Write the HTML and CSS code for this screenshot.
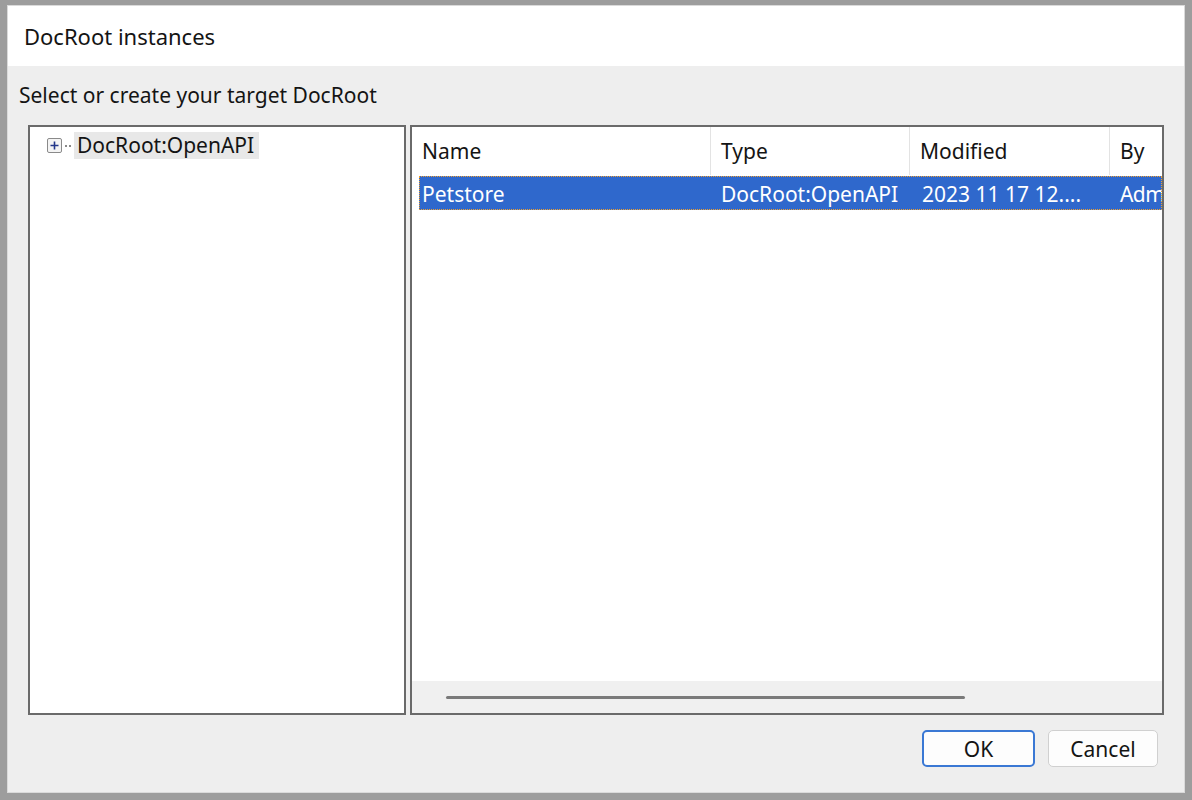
FILE: index.html
```html
<!DOCTYPE html>
<html lang="en">
<head>
    <meta charset="UTF-8">
    <title>DocRoot instances</title>
    <link rel="stylesheet" href="styles.css">
</head>
<body>
    <div class="dialog">
        <div class="titlebar">DocRoot instances</div>
        <div class="content">
            <div class="prompt">Select or create your target DocRoot</div>
            <div class="panes">
                <div class="tree">
                    <div class="tree-item">
                        <span class="expander">
                            <svg width="15" height="15" viewBox="0 0 15 15">
                                <rect x="0.5" y="0.5" width="14" height="14" rx="1.5" fill="#f4f4f4" stroke="#8a8a8a"/>
                                <path d="M3.5 7.5h8M7.5 3.5v8" stroke="#23378a" stroke-width="1.6"/>
                            </svg>
                        </span>
                        <span class="connector"></span>
                        <span class="tree-label">DocRoot:OpenAPI</span>
                    </div>
                </div>
                <div class="list">
                    <div class="list-body">
                        <div class="list-header">
                            <div class="col col-name">Name</div>
                            <div class="col col-type">Type</div>
                            <div class="col col-mod">Modified</div>
                            <div class="col col-by">By</div>
                        </div>
                        <div class="list-row selected">
                            <div class="col col-name">Petstore</div>
                            <div class="col col-type">DocRoot:OpenAPI</div>
                            <div class="col col-mod">2023 11 17 12....</div>
                            <div class="col col-by">Adm</div>
                        </div>
                    </div>
                    <div class="hscroll">
                        <div class="thumb"></div>
                    </div>
                </div>
            </div>
            <div class="buttons">
                <button class="btn btn-default">OK</button>
                <button class="btn">Cancel</button>
            </div>
        </div>
    </div>
</body>
</html>
```

FILE: styles.css
```css
/* Fenster-Rahmen */
body {
    margin: 0;
    padding: 5px 7px 7px 7px;
    background-color: #9d9d9d;
    font-family: 'Noto Sans', 'Open Sans', sans-serif;
    font-size: 21px;
    color: #141414;
}

.dialog {
    height: 788px;
    box-sizing: border-box;
    display: flex;
    flex-direction: column;
    background-color: #eeeeee;
    border: 1px solid #dadada;
}

.titlebar {
    height: 60px;
    flex: none;
    display: flex;
    align-items: center;
    padding-left: 16px;
    padding-bottom: 1px;
    box-sizing: border-box;
    background-color: #ffffff;
    font-size: 22px;
}

.content {
    flex: 1;
    display: flex;
    flex-direction: column;
    padding: 0 20px 25px 11px;
}

.prompt {
    height: 59px;
    display: flex;
    align-items: center;
    padding-bottom: 2px;
    box-sizing: border-box;
}

.panes {
    display: flex;
    gap: 4px;
    height: 590px;
    padding-left: 9px;
}

.tree {
    width: 378px;
    box-sizing: border-box;
    background-color: #ffffff;
    border: 2px solid #6a6a6a;
    padding: 5px 0 0 17px;
}

.tree-item {
    display: flex;
    align-items: center;
    height: 27px;
}

.expander {
    display: flex;
    width: 15px;
    height: 15px;
}

.connector {
    width: 6px;
    margin: 0 3px 0 3px;
    border-top: 2px dotted #888;
}

.tree-label {
    background-color: #e8e8e8;
    padding: 0 5px 0 3px;
    line-height: 27px;
}

.list {
    flex: 1;
    display: flex;
    flex-direction: column;
    box-sizing: border-box;
    background-color: #ffffff;
    border: 2px solid #6a6a6a;
    overflow: hidden;
}

.list-body {
    flex: 1;
    overflow: hidden;
}

.list-header,
.list-row {
    display: flex;
    white-space: nowrap;
}

.list-header {
    height: 48px;
    align-items: center;
}

.list-header .col {
    height: 48px;
    line-height: 49px;
    border-right: 1px solid #e3e3e3;
}

.col {
    flex: none;
    box-sizing: border-box;
    padding-left: 10px;
    overflow: hidden;
}

.col-name { width: 299px; }
.col-type { width: 199px; }
.col-mod  { width: 200px; }
.col-by   { width: 120px; }

.list-row {
    height: 34px;
    line-height: 36px;
    margin-top: 1px;
    margin-left: 7px;
}

.list-row .col-name {
    width: 292px;
    padding-left: 3px;
}

.list-row .col-mod {
    padding-left: 12px;
}

.list-row .col-by {
    flex: 1;
    width: auto;
    padding-left: 10px;
    letter-spacing: -0.6px;
}

.list-row.selected {
    background-color: #2f68cc;
    color: #ffffff;
    outline: 1px dotted #f0a030;
    outline-offset: -1px;
}

.hscroll {
    height: 32px;
    flex: none;
    display: flex;
    align-items: center;
    background-color: #f0f0f0;
    padding-left: 34px;
}

.thumb {
    width: 519px;
    height: 3px;
    border-radius: 2px;
    background-color: #7a7a7a;
}

.buttons {
    display: flex;
    justify-content: flex-end;
    gap: 13px;
    margin-top: 15px;
    padding-right: 6px;
}

.btn {
    height: 37px;
    box-sizing: border-box;
    border-radius: 5px;
    background-color: #fdfdfd;
    border: 1px solid #d0d0d0;
    font-family: 'Noto Sans', 'Open Sans', sans-serif;
    font-size: 21px;
    color: #141414;
    width: 110px;
    padding: 0;
}

.btn-default {
    width: 113px;
    border: 2px solid #3a78d4;
}
```
